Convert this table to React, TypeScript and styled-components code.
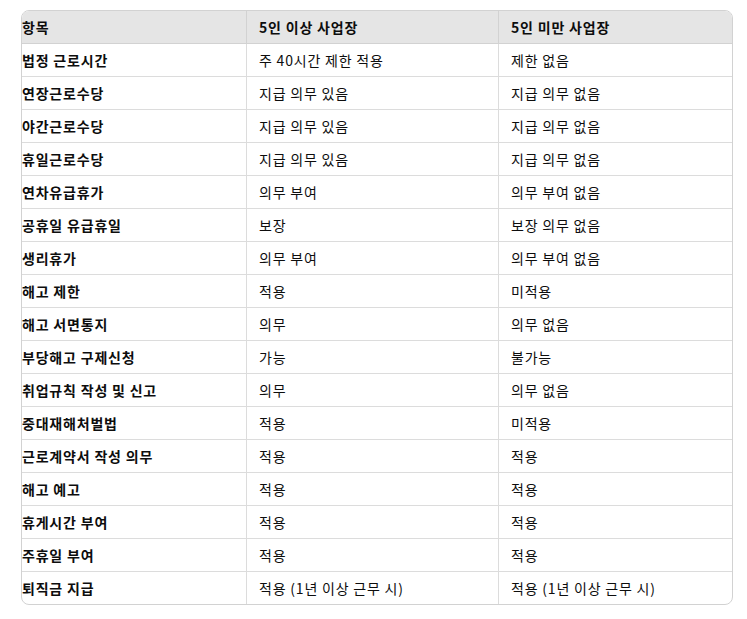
import React from 'react';
import styled, { createGlobalStyle } from 'styled-components';

const GlobalStyle = createGlobalStyle`
body{
  margin:0;
  background:#ffffff;
  font-family:"Noto Sans CJK KR", "Noto Sans", sans-serif;
  color:#0d0d0d;
}
`
const Page = styled.div`
padding:10px 0 0 21px;
`
const Table = styled.table`
width:712px;
border-collapse:separate;
border-spacing:0;
border:1px solid #d2d2d2;
border-radius:8px;
overflow:hidden;
font-size:14px;
letter-spacing:0.8px;
table-layout:fixed;
`
const HeadCell = styled.th<{ $first?: boolean }>`
height:32px;
padding:0 0 0 ${props => props.$first ? '0' : '12px'};
text-align:left;
font-weight:700;
background:#e5e5e5;
border-bottom:1px solid #d2d2d2;
border-left:${props => props.$first ? 'none' : '1px solid #d2d2d2'};
line-height:20px;
`
const Cell = styled.td<{ $first?: boolean; $last?: boolean }>`
height:32px;
padding:0 0 0 ${props => props.$first ? '0' : '12px'};
font-weight:${props => props.$first ? 700 : 400};
border-bottom:${props => props.$last ? 'none' : '1px solid #dcdcdc'};
border-left:${props => props.$first ? 'none' : '1px solid #dcdcdc'};
line-height:20px;
white-space:nowrap;
`

const rows = [
  ['법정 근로시간', '주 40시간 제한 적용', '제한 없음'],
  ['연장근로수당', '지급 의무 있음', '지급 의무 없음'],
  ['야간근로수당', '지급 의무 있음', '지급 의무 없음'],
  ['휴일근로수당', '지급 의무 있음', '지급 의무 없음'],
  ['연차유급휴가', '의무 부여', '의무 부여 없음'],
  ['공휴일 유급휴일', '보장', '보장 의무 없음'],
  ['생리휴가', '의무 부여', '의무 부여 없음'],
  ['해고 제한', '적용', '미적용'],
  ['해고 서면통지', '의무', '의무 없음'],
  ['부당해고 구제신청', '가능', '불가능'],
  ['취업규칙 작성 및 신고', '의무', '의무 없음'],
  ['중대재해처벌법', '적용', '미적용'],
  ['근로계약서 작성 의무', '적용', '적용'],
  ['해고 예고', '적용', '적용'],
  ['휴게시간 부여', '적용', '적용'],
  ['주휴일 부여', '적용', '적용'],
  ['퇴직금 지급', '적용 (1년 이상 근무 시)', '적용 (1년 이상 근무 시)'],
]

export default function App() {
  return (
    <>
      <GlobalStyle />
      <Page>
        <Table>
          <colgroup>
            <col style={{ width: 224 }} />
            <col style={{ width: 252 }} />
            <col />
          </colgroup>
          <thead>
            <tr>
              <HeadCell $first>항목</HeadCell>
              <HeadCell>5인 이상 사업장</HeadCell>
              <HeadCell>5인 미만 사업장</HeadCell>
            </tr>
          </thead>
          <tbody>
            {rows.map((row, i) => (
              <tr key={row[0]}>
                {row.map((text, j) => (
                  <Cell key={j} $first={j === 0} $last={i === rows.length - 1}>{text}</Cell>
                ))}
              </tr>
            ))}
          </tbody>
        </Table>
      </Page>
    </>
  );
}
